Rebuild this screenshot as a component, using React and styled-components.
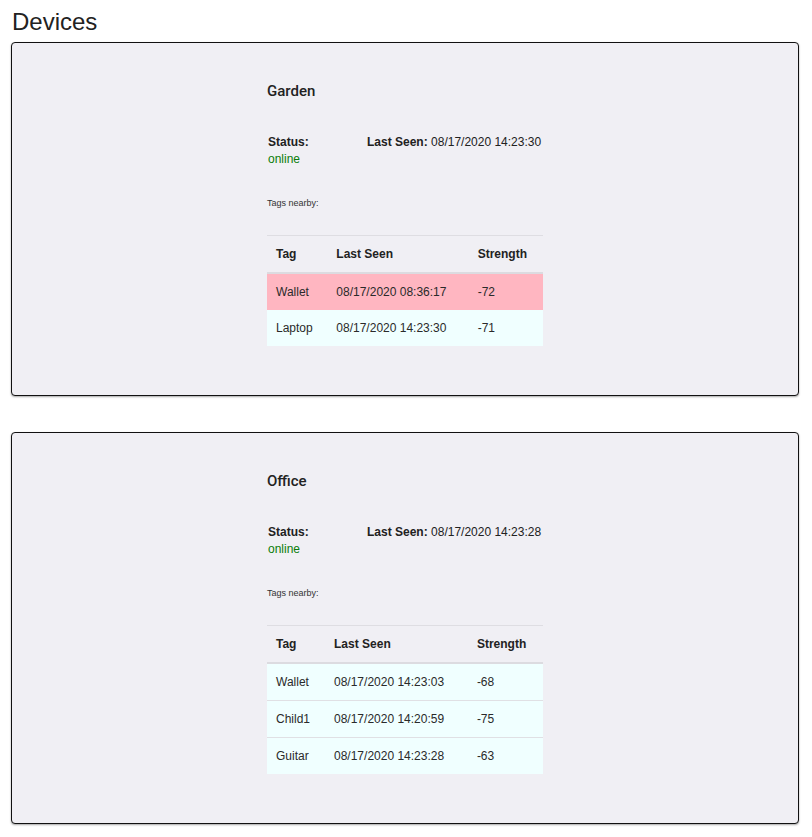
import React from "react";
import styled, { createGlobalStyle } from "styled-components";

const GlobalStyle = createGlobalStyle`
  html, body { margin: 0; padding: 0; background: #fff; }
  body { font-family: "Liberation Sans", Arial, sans-serif; color: #212121; }
`;

const Page = styled.div`
  padding: 0 13px 0 11px;
`;

const Title = styled.h1`
  margin: 8px 0 6px 1px;
  font-family: "Liberation Sans", Arial, sans-serif;
  font-weight: 400;
  font-size: 24px;
  line-height: 28px;
  color: #222;
`;

const Card = styled.section`
  background: #f0eff4;
  border: 1px solid #111;
  border-radius: 4px;
  box-shadow: 0 1px 2px rgba(0, 0, 0, 0.35);
  margin-bottom: 36px;
  padding: 39px 0 49px;
  display: flex;
  justify-content: center;
`;

const Column = styled.div`
  width: 276px;
`;

const DeviceName = styled.h2`
  margin: 0 0 34px;
  font-family: Roboto, "Liberation Sans", sans-serif;
  font-weight: 500;
  font-size: 15px;
  line-height: 18px;
  color: #222;
`;

const StatusRow = styled.div`
  display: flex;
  font-size: 12px;
  line-height: 1.43;
  margin-bottom: 29px;
  padding-left: 1px;
`;

const StatusBlock = styled.div`
  width: 99px;
`;

const Label = styled.span`
  font-weight: 700;
`;

const Online = styled.div`
  color: #0a7d0a;
`;

const TagsNote = styled.div`
  font-size: 9px;
  line-height: 1.43;
  margin-bottom: 25px;
  color: #333;
`;

const Table = styled.table`
  width: 276px;
  border-collapse: collapse;
  border-top: 1px solid #dedde2;
  font-size: 12px;
  line-height: 16px;
`;

const HeadCell = styled.th`
  text-align: left;
  font-weight: 700;
  padding: 10px 9px;
  border-bottom: 2px solid #dcdbe0;
  white-space: nowrap;
  color: #222;
`;

const Row = styled.tr`
  background: ${(p) => (p.$stale ? "#ffb6c1" : "#f0ffff")};
  & + & td { border-top: 1px solid #e0e0e4; }
`;

const Cell = styled.td`
  padding: 10px 9px;
  white-space: nowrap;
  color: #2a2a2a;
`;

const devices = [
  {
    name: "Garden",
    lastSeen: "08/17/2020 14:23:30",
    tags: [
      { tag: "Wallet", seen: "08/17/2020 08:36:17", strength: -72, stale: true },
      { tag: "Laptop", seen: "08/17/2020 14:23:30", strength: -71 },
    ],
  },
  {
    name: "Office",
    lastSeen: "08/17/2020 14:23:28",
    tags: [
      { tag: "Wallet", seen: "08/17/2020 14:23:03", strength: -68 },
      { tag: "Child1", seen: "08/17/2020 14:20:59", strength: -75 },
      { tag: "Guitar", seen: "08/17/2020 14:23:28", strength: -63 },
    ],
  },
];

function DeviceCard({ device }) {
  return (
    <Card>
      <Column>
        <DeviceName>{device.name}</DeviceName>
        <StatusRow>
          <StatusBlock>
            <Label>Status:</Label>
            <Online>online</Online>
          </StatusBlock>
          <div>
            <Label>Last Seen:</Label> {device.lastSeen}
          </div>
        </StatusRow>
        <TagsNote>Tags nearby:</TagsNote>
        <Table>
          <thead>
            <tr>
              <HeadCell>Tag</HeadCell>
              <HeadCell>Last Seen</HeadCell>
              <HeadCell>Strength</HeadCell>
            </tr>
          </thead>
          <tbody>
            {device.tags.map((t) => (
              <Row key={t.tag} $stale={t.stale}>
                <Cell>{t.tag}</Cell>
                <Cell>{t.seen}</Cell>
                <Cell>{t.strength}</Cell>
              </Row>
            ))}
          </tbody>
        </Table>
      </Column>
    </Card>
  );
}

export default function App() {
  return (
    <Page>
      <GlobalStyle />
      <Title>Devices</Title>
      {devices.map((d) => (
        <DeviceCard key={d.name} device={d} />
      ))}
    </Page>
  );
}
